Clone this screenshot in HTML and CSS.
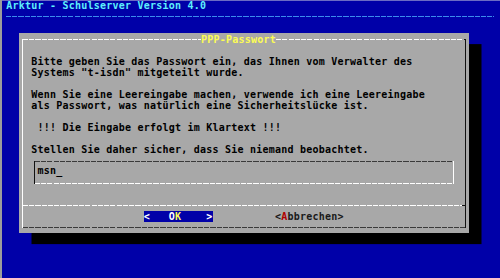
FILE: index.html
```html
<!DOCTYPE html>
<html lang="de">
<head>
    <meta charset="UTF-8">
    <meta name="viewport" content="width=device-width, initial-scale=1.0">
    <title>Arktur - PPP-Passwort</title>
    <link rel="stylesheet" href="styles.css">
</head>
<body>
    <div class="screen">
        <div class="backtitle">Arktur - Schulserver Version 4.0</div>
        <div class="backrule"><span class="rule-line"></span></div>

        <div class="dialog">
            <div class="frame">
                <div class="frame-head">
                    <span class="head-line head-left"></span>
                    <span class="dialog-title">PPP-Passwort</span>
                    <span class="head-line head-right"></span>
                </div>

                <div class="frame-body">
                    <div class="row"></div>
                    <div class="row">Bitte geben Sie das Passwort ein, das Ihnen vom Verwalter des</div>
                    <div class="row">Systems "t-isdn" mitgeteilt wurde.</div>
                    <div class="row"></div>
                    <div class="row">Wenn Sie eine Leereingabe machen, verwende ich eine Leereingabe</div>
                    <div class="row">als Passwort, was natürlich eine Sicherheitslücke ist.</div>
                    <div class="row"></div>
                    <div class="row"> !!! Die Eingabe erfolgt im Klartext !!!</div>
                    <div class="row"></div>
                    <div class="row">Stellen Sie daher sicher, dass Sie niemand beobachtet.</div>

                    <div class="input-area">
                        <div class="input-box">msn_</div>
                    </div>

                    <div class="row"></div>
                    <div class="separator-row"><span class="separator"></span></div>
                    <div class="row buttons">                  <span class="btn btn-active">&lt;   O<span class="key-active">K</span>    &gt;</span>          <span class="btn">&lt;<span class="key">A</span>bbrechen&gt;</span></div>
                </div>
            </div>
        </div>
    </div>
</body>
</html>
```

FILE: styles.css
```css
body {
    margin: 0;
    background-color: #0000a8;
}

.screen {
    width: 500px;
    height: 278px;
    overflow: hidden;
    background-color: #0000a8;
    box-shadow: inset 2px 0 0 #9c9c9c, inset 0 1px 0 #6c6cc4;
    font-family: "DejaVu Sans Mono", "Liberation Mono", monospace;
    font-weight: bold;
    font-size: 10px;
    letter-spacing: 0.23px;
    line-height: 11.111px;
}

.backtitle {
    height: 11.111px;
    padding-left: 6.25px;
    color: #5ef0fc;
    white-space: pre;
}

.backrule {
    height: 11.111px;
    display: flex;
    align-items: center;
    padding-left: 6.25px;
}

.rule-line {
    display: block;
    width: 487.5px;
    height: 1px;
    background: repeating-linear-gradient(90deg, #3c8cec 0 5px, transparent 5px 6.25px);
}

/* dialog box with its black drop shadow */
.dialog {
    margin-top: 11.111px;
    margin-left: 18.75px;
    width: 450px;
    height: 200px;
    box-sizing: border-box;
    padding: 6px 3px 5px 3px;
    background-color: #a8a8a8;
    box-shadow: 12.5px 11.111px 0 #000;
}

.frame {
    height: 189px;
    box-sizing: border-box;
    border-left: 1px solid #fff;
    border-right: 1px solid #111;
    background: repeating-linear-gradient(90deg, #3a3a3a 0 5px, transparent 5px 6.25px) bottom / 100% 1px no-repeat;
    display: flex;
    flex-direction: column;
}

.frame-head {
    height: 1px;
    display: flex;
    align-items: center;
    margin-bottom: 4.111px;
}

.head-line {
    display: block;
    height: 1px;
    background: repeating-linear-gradient(90deg, #fff 0 5px, transparent 5px 6.25px);
}

.head-left {
    width: 178.25px;
}

.head-right {
    flex: 1;
    box-shadow: inset -1px 0 0 #111;
}

.dialog-title {
    color: #fcfc54;
    background-color: #a8a8a8;
    height: 11.111px;
    flex: none;
    white-space: pre;
}

.frame-body {
    display: flex;
    flex-direction: column;
}

.row {
    height: 11.111px;
    padding-left: 8.5px;
    color: #000;
    white-space: pre;
}

.input-area {
    height: 33.333px;
    box-sizing: border-box;
    padding-top: 5px;
    padding-left: 11.25px;
}

.input-box {
    width: 419.5px;
    height: 23px;
    box-sizing: border-box;
    padding: 4.5px 0 0 2.5px;
    border-left: 1px solid #111;
    border-right: 1px solid #fff;
    color: #000;
    white-space: pre;
    background:
        repeating-linear-gradient(90deg, #3a3a3a 0 5px, transparent 5px 6.25px) top / 100% 1px no-repeat,
        repeating-linear-gradient(90deg, #fff 0 5px, transparent 5px 6.25px) bottom / 100% 1px no-repeat;
}

.separator-row {
    height: 11.111px;
    display: flex;
    align-items: center;
}

.separator {
    display: block;
    flex: 1;
    height: 1px;
    background: repeating-linear-gradient(90deg, #fff 0 5px, transparent 5px 6.25px);
    box-shadow: inset -3px 0 0 #111;
}

.btn {
    color: #1a1a1a;
}

.btn-active {
    background-color: #0000a8;
    color: #fff;
}

.key-active {
    color: #fcfc54;
}

.key {
    color: #b00000;
}
```
